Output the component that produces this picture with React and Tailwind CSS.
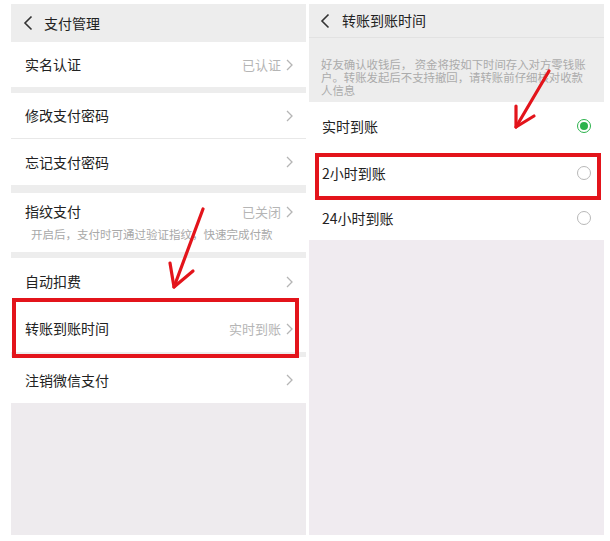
import React from "react";

const font = { fontFamily: '"Noto Sans CJK SC", "Noto Sans", sans-serif' };

const Chevron = () => (
  <svg width="7" height="12" viewBox="0 0 7 12" className="ml-[5px]">
    <path d="M1 1l5 5-5 5" fill="none" stroke="#b5b5b5" strokeWidth="1.3" />
  </svg>
);

const Back = () => (
  <svg width="10" height="16" viewBox="0 0 10 16">
    <path d="M8.5 1.5L2 8l6.5 6.5" fill="none" stroke="#333" strokeWidth="1.6" />
  </svg>
);

const Row = ({ label, value, h, line }) => (
  <div
    className={`flex items-center justify-between bg-white pl-[14px] pr-[13px] ${h} ${
      line ? "border-b border-[#e8e8e8]" : ""
    }`}
  >
    <span className="text-[14px] text-[#222]">{label}</span>
    <span className="flex items-center text-[13px] text-[#b5b5b5]">
      {value}
      <Chevron />
    </span>
  </div>
);

const Gap = ({ h }) => <div className={`bg-[#ededed] ${h}`} />;

const Radio = ({ on }) =>
  on ? (
    <span className="flex h-[14px] w-[14px] items-center justify-center rounded-full border-[1.5px] border-[#2bb24c]">
      <span className="h-[8px] w-[8px] rounded-full bg-[#2bb24c]" />
    </span>
  ) : (
    <span className="h-[14px] w-[14px] rounded-full border border-[#b8b8b8]" />
  );

const Option = ({ label, on, h }) => (
  <div className={`flex items-center justify-between bg-white pl-[13px] pr-[13px] ${h}`}>
    <span className="text-[14px] text-[#222]">{label}</span>
    <Radio on={on} />
  </div>
);

const Arrow = ({ x1, y1, x2, y2, w1, w2 }) => (
  <g stroke="#e3141b" strokeWidth="3.2" strokeLinecap="round" fill="none">
    <line x1={x1} y1={y1} x2={x2} y2={y2} />
    <polyline points={`${w1[0]},${w1[1]} ${x2},${y2} ${w2[0]},${w2[1]}`} strokeLinejoin="round" />
  </g>
);

export default function App() {
  return (
    <div className="relative flex h-[541px] w-[610px] gap-[3px] bg-white pl-[11px] pt-[4px] pb-[6px]" style={font}>
      {/* left screen */}
      <div className="flex w-[295px] flex-col bg-[#eeebee]">
        <div className="flex h-[38px] items-center gap-[11px] bg-[#ededed] pl-[12px]">
          <Back />
          <span className="text-[14px] text-[#222]">支付管理</span>
        </div>
        <Row label="实名认证" value="已认证" h="h-[45px]" />
        <Gap h="h-[6px]" />
        <Row label="修改支付密码" h="h-[46px]" line />
        <Row label="忘记支付密码" h="h-[46px]" />
        <Gap h="h-[8px]" />
        <div className="flex h-[59px] flex-col justify-center bg-white pl-[14px] pr-[13px]">
          <div className="flex items-center justify-between">
            <span className="text-[14px] text-[#222]">指纹支付</span>
            <span className="flex items-center text-[13px] text-[#b5b5b5]">
              已关闭
              <Chevron />
            </span>
          </div>
          <span className="mt-[4px] pl-[6px] text-[11.5px] text-[#a8a8a8]">开启后，支付时可通过验证指纹，快速完成付款</span>
        </div>
        <Gap h="h-[6px]" />
        <Row label="自动扣费" h="h-[47px]" />
        <Row label="转账到账时间" value="实时到账" h="h-[47px]" />
        <Gap h="h-[5px]" />
        <Row label="注销微信支付" h="h-[46px]" />
        <div className="flex-1 bg-[#eeebee]" />
      </div>

      {/* right screen */}
      <div className="flex w-[295px] flex-col bg-[#f0ebf0]">
        <div className="flex h-[34px] items-center gap-[12px] border-b border-[#e2e2e2] bg-[#ededed] pl-[11px]">
          <Back />
          <span className="text-[14px] text-[#222]">转账到账时间</span>
        </div>
        <div className="h-[64px] bg-[#ededed] pl-[12px] pr-[10px] pt-[20px] text-[11.4px] leading-[13px] text-[#ababab]">
          好友确认收钱后， 资金将按如下时间存入对方零钱账户。转账发起后不支持撤回，请转账前仔细核对收款人信息
        </div>
        <Option label="实时到账" on h="h-[48px]" />
        <Option label="2小时到账" h="h-[46px]" />
        <Option label="24小时到账" h="h-[44px]" />
        <div className="flex-1" />
      </div>

      {/* annotations */}
      <div className="absolute left-[12px] top-[298px] h-[60px] w-[287px] border-[4px] border-[#e3141b]" />
      <div className="absolute left-[315px] top-[153px] h-[47px] w-[286px] border-[4px] border-[#e3141b]" />
      <svg className="pointer-events-none absolute left-0 top-0" width="610" height="541">
        <Arrow x1={203} y1={209} x2={174} y2={287} w1={[170, 263]} w2={[193, 271]} />
        <Arrow x1={549} y1={71} x2={516} y2={127} w1={[516, 106]} w2={[534, 116]} />
      </svg>
    </div>
  );
}
